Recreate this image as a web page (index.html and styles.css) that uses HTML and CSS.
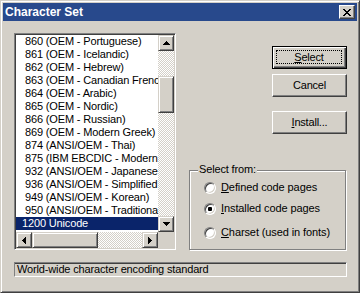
FILE: index.html
```html
<!DOCTYPE html>
<html lang="en">
<head>
    <meta charset="UTF-8">
    <title>Character Set</title>
    <link rel="stylesheet" href="styles.css">
</head>
<body>
    <div class="window">
        <div class="titlebar">
            <span class="title">Character Set</span>
            <span class="close-btn">
                <svg width="8" height="7" shape-rendering="crispEdges">
                    <path d="M0 0h2v1h-2zM6 0h2v1h-2zM1 1h2v1h-2zM5 1h2v1h-2zM2 2h4v1h-4zM3 3h2v1h-2zM2 4h4v1h-4zM1 5h2v1h-2zM5 5h2v1h-2zM0 6h2v1h-2zM6 6h2v1h-2z" fill="#000"/>
                </svg>
            </span>
        </div>

        <div class="main">
            <div class="listbox">
                <div class="list-body">
                    <div class="rows">
                        <div class="row">860 (OEM - Portuguese)</div>
                        <div class="row">861 (OEM - Icelandic)</div>
                        <div class="row">862 (OEM - Hebrew)</div>
                        <div class="row">863 (OEM - Canadian French)</div>
                        <div class="row">864 (OEM - Arabic)</div>
                        <div class="row">865 (OEM - Nordic)</div>
                        <div class="row">866 (OEM - Russian)</div>
                        <div class="row">869 (OEM - Modern Greek)</div>
                        <div class="row">874 (ANSI/OEM - Thai)</div>
                        <div class="row">875 (IBM EBCDIC - Modern Greek)</div>
                        <div class="row">932 (ANSI/OEM - Japanese Shift-JIS)</div>
                        <div class="row">936 (ANSI/OEM - Simplified Chinese GBK)</div>
                        <div class="row">949 (ANSI/OEM - Korean)</div>
                        <div class="row">950 (ANSI/OEM - Traditional Chinese Big5)</div>
                        <div class="row row-wide selected">1200 Unicode</div>
                        <div class="row row-wide">1250 (ANSI - Central European)</div>
                    </div>
                    <div class="vscroll">
                        <div class="sb-btn">
                            <svg width="7" height="4" shape-rendering="crispEdges"><path d="M3 0h1v1h1v1h1v1h1v1H0V3h1V2h1V1h1z" fill="#000"/></svg>
                        </div>
                        <div class="track track-v">
                            <div class="thumb thumb-v"></div>
                        </div>
                        <div class="sb-btn">
                            <svg width="7" height="4" shape-rendering="crispEdges"><path d="M0 0h7v1h-1v1h-1v1h-1v1H3V3H2V2H1V1H0z" fill="#000"/></svg>
                        </div>
                    </div>
                </div>
                <div class="hscroll-row">
                    <div class="hscroll">
                        <div class="sb-btn">
                            <svg width="4" height="7" shape-rendering="crispEdges"><path d="M3 0h1v7h-1v-1h-1v-1h-1v-1H0V3h1V2h1V1h1z" fill="#000"/></svg>
                        </div>
                        <div class="thumb thumb-h"></div>
                        <div class="track track-h"></div>
                        <div class="sb-btn">
                            <svg width="4" height="7" shape-rendering="crispEdges"><path d="M0 0h1v1h1v1h1v1h1v1H3v1H2v1H1v1H0z" fill="#000"/></svg>
                        </div>
                    </div>
                    <div class="corner"></div>
                </div>
            </div>

            <div class="side">
                <div class="btn btn-default btn-select"><span class="focus"><u>S</u>elect</span></div>
                <div class="btn btn-cancel"><span class="label">Cancel</span></div>
                <div class="btn btn-install"><span class="label"><u>I</u>nstall...</span></div>

                <div class="group">
                    <span class="group-label">Select from:</span>
                    <div class="radio-row">
                        <span class="radio"></span>
                        <span><u>D</u>efined code pages</span>
                    </div>
                    <div class="radio-row radio-row-2">
                        <span class="radio checked"></span>
                        <span><u>I</u>nstalled code pages</span>
                    </div>
                    <div class="radio-row radio-row-3">
                        <span class="radio"></span>
                        <span><u>C</u>harset (used in fonts)</span>
                    </div>
                </div>
            </div>
        </div>

        <div class="status">World-wide character encoding standard</div>
    </div>
</body>
</html>
```

FILE: styles.css
```css
body {
    margin: 0;
    background: #d4d0c8;
    font-family: "Liberation Sans", Arial, sans-serif;
    font-size: 11px;
    color: #000;
}
.window {
    width: 360px;
    height: 293px;
    box-sizing: border-box;
    padding: 2px;
    background: #d4d0c8;
    border: 1px solid;
    border-color: #d4d0c8 #404040 #404040 #d4d0c8;
    box-shadow: inset 1px 1px #fff, inset -1px -1px #808080;
}
.titlebar {
    height: 18px;
    background: #28498c;
    display: flex;
    align-items: center;
    justify-content: space-between;
    padding: 0 2px 0 2px;
}
.title {
    color: #fff;
    font-weight: bold;
    font-size: 12px;
    line-height: 18px;
}
.close-btn {
    width: 16px;
    height: 14px;
    box-sizing: border-box;
    background: #d4d0c8;
    border: 1px solid;
    border-color: #fff #404040 #404040 #fff;
    box-shadow: inset -1px -1px #808080;
    display: flex;
    align-items: center;
    justify-content: center;
}
.close-btn svg {
    display: block;
    margin-left: -1px;
}

.main {
    display: flex;
    padding: 12px 10px 0 11px;
}

/* list box */
.listbox {
    width: 162px;
    height: 217px;
    box-sizing: border-box;
    border: 1px solid;
    border-color: #808080 #fff #fff #808080;
    box-shadow: inset 1px 1px #404040, inset -1px -1px #d4d0c8;
    padding: 1px;
    flex-shrink: 0;
}
.list-body {
    display: flex;
    height: 197px;
}
.rows {
    width: 142px;
    height: 197px;
    overflow: hidden;
    background: #fff;
}
.row {
    height: 13px;
    line-height: 13px;
    padding-left: 9px;
    white-space: nowrap;
    letter-spacing: -0.15px;
}
.row-wide {
    padding-left: 6px;
}
.selected {
    background: #0a246a;
    color: #fff;
}
.vscroll {
    width: 16px;
    display: flex;
    flex-direction: column;
}
.sb-btn {
    width: 16px;
    height: 16px;
    box-sizing: border-box;
    flex-shrink: 0;
    background: #d4d0c8;
    border: 1px solid;
    border-color: #d4d0c8 #404040 #404040 #d4d0c8;
    box-shadow: inset 1px 1px #fff, inset -1px -1px #808080;
    display: flex;
    align-items: center;
    justify-content: center;
}
.sb-btn svg {
    display: block;
}
.track {
    background: repeating-conic-gradient(#fff 0 25%, #d4d0c8 0 50%) 0 0 / 2px 2px;
}
.track-v {
    flex: 1;
}
.track-h {
    flex: 1;
}
.thumb {
    box-sizing: border-box;
    background: #d4d0c8;
    border: 1px solid;
    border-color: #d4d0c8 #404040 #404040 #d4d0c8;
    box-shadow: inset 1px 1px #fff, inset -1px -1px #808080;
}
.thumb-v {
    margin-top: 25px;
    height: 37px;
}
.thumb-h {
    width: 66px;
}
.hscroll-row {
    display: flex;
    height: 16px;
}
.hscroll {
    width: 142px;
    display: flex;
}
.corner {
    width: 16px;
    background: #d4d0c8;
}

/* buttons */
.side {
    flex: 1;
    margin-left: 13px;
    display: flex;
    flex-direction: column;
    align-items: flex-end;
}
.btn {
    width: 75px;
    height: 23px;
    box-sizing: border-box;
    background: #d4d0c8;
    border: 1px solid;
    border-color: #fff #404040 #404040 #fff;
    box-shadow: inset -1px -1px #808080;
    display: flex;
    align-items: center;
    justify-content: center;
    letter-spacing: -0.2px;
}
.btn-default {
    border-color: #000;
    box-shadow: inset 1px 1px #fff, inset -1px -1px #404040, inset -2px -2px #808080;
    padding: 3px 4px 4px 3px;
}
.focus {
    flex: 1;
    align-self: stretch;
    border: 1px dotted #000;
    display: flex;
    align-items: center;
    justify-content: center;
    line-height: 13px;
}
.label {
    line-height: 13px;
    padding-bottom: 1px;
}
.btn-select {
    margin-top: 13px;
}
.btn-cancel {
    margin-top: 5px;
}
.btn-install {
    margin-top: 14px;
}

/* group box */
.group {
    position: relative;
    align-self: stretch;
    margin: 36px 1px 0 0;
    height: 80px;
    box-sizing: border-box;
    border: 1px solid #808080;
    box-shadow: inset 1px 1px #fff, 1px 1px #fff;
    padding: 10px 0 0 14px;
}
.group-label {
    position: absolute;
    top: -8px;
    left: 8px;
    padding: 0 1px;
    background: #d4d0c8;
    line-height: 13px;
    letter-spacing: -0.15px;
}
.radio-row {
    display: flex;
    align-items: center;
    height: 13px;
    line-height: 13px;
    letter-spacing: -0.1px;
}
.radio-row-2 {
    margin-top: 8px;
}
.radio-row-3 {
    margin-top: 11px;
}
.radio {
    position: relative;
    width: 12px;
    height: 12px;
    box-sizing: border-box;
    border-radius: 50%;
    background: #fff;
    border: 1px solid;
    border-color: #808080 #fff #fff #808080;
    box-shadow: inset 1px 1px #404040, inset -1px -1px #d4d0c8;
    margin-right: 5px;
    flex-shrink: 0;
}
.checked::after {
    content: "";
    position: absolute;
    left: 3px;
    top: 3px;
    width: 4px;
    height: 4px;
    border-radius: 1px;
    background: #000;
}

/* status line */
.status {
    margin: 12px 10px 0 11px;
    height: 15px;
    box-sizing: border-box;
    border: 1px solid;
    border-color: #808080 #fff #fff #808080;
    box-shadow: inset 0 1px #404040;
    padding-left: 2px;
    line-height: 13px;
    letter-spacing: -0.15px;
    white-space: nowrap;
    overflow: hidden;
}
```
